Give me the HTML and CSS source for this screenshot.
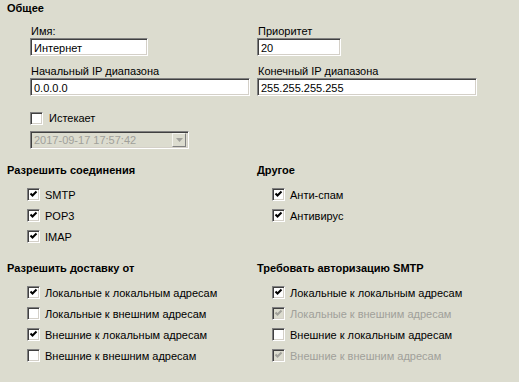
FILE: index.html
```html
<!doctype html>
<html>
    <head>
        <title>Диапазон IP</title>
        <meta charset="utf-8">
        <link rel="stylesheet" href="styles.css">
    </head>
    <body>
        <div class="page">
            <h2 class="full">Общее</h2>

            <div class="field">
                <span>Имя:</span>
                <div class="edit name">Интернет</div>
            </div>
            <div class="field right">
                <span>Приоритет</span>
                <div class="edit prio">20</div>
            </div>

            <div class="field gap">
                <span>Начальный IP диапазона</span>
                <div class="edit ip">0.0.0.0</div>
            </div>
            <div class="field right gap">
                <span>Конечный IP диапазона</span>
                <div class="edit ip">255.255.255.255</div>
            </div>

            <div class="full expire">
                <label class="check"><span class="box"></span>Истекает</label>
                <div class="combo">
                    <span>2017-09-17 17:57:42</span>
                    <span class="drop"><svg width="7" height="4" viewBox="0 0 7 4"><path d="M0 0h7L3.5 4z" fill="#a0a09a"/></svg></span>
                </div>
            </div>

            <section class="group">
                <h2>Разрешить соединения</h2>
                <label class="check"><span class="box on"><svg width="9" height="9" viewBox="0 0 9 9"><path d="M1.5 3.5l2 2 4-4" stroke="#000" stroke-width="2" fill="none"/></svg></span>SMTP</label>
                <label class="check"><span class="box on"><svg width="9" height="9" viewBox="0 0 9 9"><path d="M1.5 3.5l2 2 4-4" stroke="#000" stroke-width="2" fill="none"/></svg></span>POP3</label>
                <label class="check"><span class="box on"><svg width="9" height="9" viewBox="0 0 9 9"><path d="M1.5 3.5l2 2 4-4" stroke="#000" stroke-width="2" fill="none"/></svg></span>IMAP</label>
            </section>

            <section class="group right">
                <h2>Другое</h2>
                <label class="check"><span class="box on"><svg width="9" height="9" viewBox="0 0 9 9"><path d="M1.5 3.5l2 2 4-4" stroke="#000" stroke-width="2" fill="none"/></svg></span>Анти-спам</label>
                <label class="check"><span class="box on"><svg width="9" height="9" viewBox="0 0 9 9"><path d="M1.5 3.5l2 2 4-4" stroke="#000" stroke-width="2" fill="none"/></svg></span>Антивирус</label>
            </section>

            <section class="group">
                <h2>Разрешить доставку от</h2>
                <label class="check"><span class="box on"><svg width="9" height="9" viewBox="0 0 9 9"><path d="M1.5 3.5l2 2 4-4" stroke="#000" stroke-width="2" fill="none"/></svg></span>Локальные к локальным адресам</label>
                <label class="check"><span class="box"></span>Локальные к внешним адресам</label>
                <label class="check"><span class="box on"><svg width="9" height="9" viewBox="0 0 9 9"><path d="M1.5 3.5l2 2 4-4" stroke="#000" stroke-width="2" fill="none"/></svg></span>Внешние к локальным адресам</label>
                <label class="check"><span class="box"></span>Внешние к внешним адресам</label>
            </section>

            <section class="group right">
                <h2>Требовать авторизацию SMTP</h2>
                <label class="check"><span class="box on"><svg width="9" height="9" viewBox="0 0 9 9"><path d="M1.5 3.5l2 2 4-4" stroke="#000" stroke-width="2" fill="none"/></svg></span>Локальные к локальным адресам</label>
                <label class="check disabled"><span class="box on"><svg width="9" height="9" viewBox="0 0 9 9"><path d="M1.5 3.5l2 2 4-4" stroke="#a0a09a" stroke-width="2" fill="none"/></svg></span>Локальные к внешним адресам</label>
                <label class="check"><span class="box"></span>Внешние к локальным адресам</label>
                <label class="check disabled"><span class="box on"><svg width="9" height="9" viewBox="0 0 9 9"><path d="M1.5 3.5l2 2 4-4" stroke="#a0a09a" stroke-width="2" fill="none"/></svg></span>Внешние к внешним адресам</label>
            </section>
        </div>
    </body>
</html>
```

FILE: styles.css
```css
html, body {
    margin: 0;
    width: 100%;
    height: 100%;
    background: #dcdccf;
    color: #000;
    font-size: 11px;
    font-family: "Liberation Sans", Arial, sans-serif;
}

.page {
    display: grid;
    grid-template-columns: 250px 1fr;
    padding: 1px 0 0 7px;
}

.full {
    grid-column: 1 / -1;
}

h2 {
    margin: 0;
    font-size: 11px;
    font-weight: bold;
    line-height: 14px;
}

/* text fields */

.field {
    padding: 9px 0 0 23px;
}

.field.gap {
    padding-top: 8px;
}

.field.right {
    padding-left: 0;
}

.field span {
    display: block;
    line-height: 14px;
    padding-left: 1px;
}

.edit {
    box-sizing: border-box;
    height: 18px;
    padding: 2px 3px;
    line-height: 14px;
    background: #fff;
    border-top: 1px solid #808080;
    border-left: 1px solid #808080;
    border-right: 1px solid #fff;
    border-bottom: 1px solid #fff;
    box-shadow: inset 1px 1px #404040, inset -1px -1px #d4d0c8;
    white-space: nowrap;
}

.edit.name { width: 118px; }
.edit.prio { width: 84px; }
.edit.ip { width: 220px; }

/* expire row */

.expire {
    padding: 15px 0 0 23px;
}

.expire .check {
    height: 14px;
    padding: 0;
}

.expire .box {
    margin-right: 6px;
}

.combo {
    box-sizing: border-box;
    display: flex;
    align-items: center;
    justify-content: space-between;
    width: 159px;
    height: 18px;
    margin-top: 6px;
    padding: 2px 2px 2px 3px;
    color: #a0a09a;
    border-top: 1px solid #808080;
    border-left: 1px solid #808080;
    border-right: 1px solid #fff;
    border-bottom: 1px solid #fff;
    box-shadow: inset 1px 1px #404040, inset -1px -1px #d4d0c8;
}

.drop {
    box-sizing: border-box;
    display: flex;
    align-items: center;
    justify-content: center;
    width: 14px;
    height: 14px;
    background: #dcdccf;
    border-top: 1px solid #f4f4ee;
    border-left: 1px solid #f4f4ee;
    border-right: 1px solid #808080;
    border-bottom: 1px solid #808080;
}

/* check groups */

.group {
    padding-top: 14px;
}

.group h2 {
    margin-bottom: 7px;
}

.check {
    display: flex;
    align-items: center;
    height: 21px;
    padding-left: 20px;
}

.group.right .check {
    padding-left: 15px;
}

.check.disabled {
    color: #a0a09a;
}

.box {
    box-sizing: border-box;
    display: flex;
    align-items: center;
    justify-content: center;
    width: 13px;
    height: 13px;
    margin-right: 5px;
    background: #fff;
    border-top: 1px solid #808080;
    border-left: 1px solid #808080;
    border-right: 1px solid #fff;
    border-bottom: 1px solid #fff;
    box-shadow: inset 1px 1px #404040, inset -1px -1px #d4d0c8;
}

.disabled .box {
    background: #dcdccf;
}
```
